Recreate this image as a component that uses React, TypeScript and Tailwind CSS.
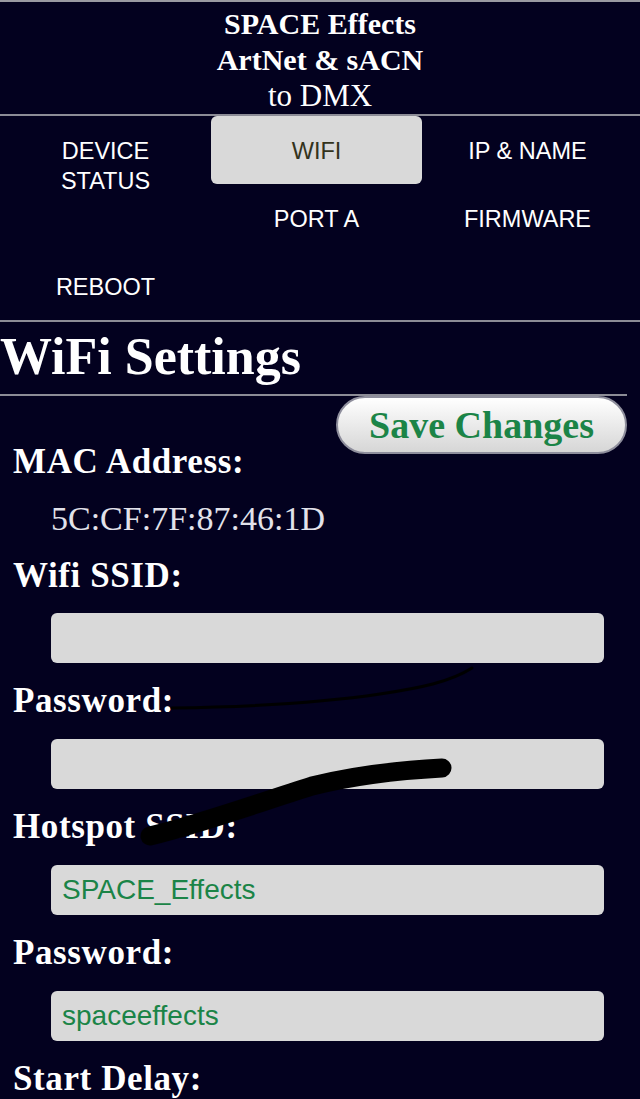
const serif = "font-['Liberation_Serif',_'Times_New_Roman',_serif]";
const sans = "font-['Liberation_Sans',_Arial,_sans-serif]";

const navItems: (string | null)[] = [
  "DEVICE STATUS",
  "WIFI",
  "IP & NAME",
  null,
  "PORT A",
  "FIRMWARE",
  "REBOOT",
];

function Label({ children, top = "mt-[18px]" }: { children: React.ReactNode; top?: string }) {
  return (
    <div
      className={`${serif} ${top} pl-[13px] text-[35px] font-bold leading-[40px] tracking-[0.6px] text-white`}
    >
      {children}
    </div>
  );
}

function Field({ value, top = "mt-[18px]" }: { value?: string; top?: string }) {
  return (
    <div
      className={`${sans} ${top} ml-[51px] flex h-[50px] w-[553px] items-center rounded-[6px] bg-[#d9d9d9] px-[11px] text-[28px] text-[#1b8447]`}
    >
      {value}
    </div>
  );
}

export default function App() {
  return (
    <div className="relative min-h-screen w-[640px] overflow-hidden bg-[#03011f]">
      <div className="border-t-[2px] border-[#9a9aa2]" />
      <header className={`${serif} pt-[4px] text-center text-[30px] leading-[36px] text-white`}>
        <div className="font-bold">SPACE Effects</div>
        <div className="font-bold">ArtNet &amp; sACN</div>
        <div className="text-[31px]">to DMX</div>
      </header>
      <div className="h-[2px] bg-[#8c8c96]" />

      <nav className={`${sans} grid grid-cols-[211px_211px_211px] text-[23.5px]`}>
        {navItems.map((item, i) => (
          <div key={i} className="h-[68px]">
            {item && (
              <div
                className={`mx-auto flex h-[68px] w-[211px] justify-center pt-[20px] text-center leading-[30px] ${
                  item === "WIFI" ? "rounded-[6px] bg-[#d9d9d9] text-[#33331c]" : "text-white"
                }`}
              >
                {item === "DEVICE STATUS" ? (
                  <span>
                    DEVICE
                    <br />
                    STATUS
                  </span>
                ) : (
                  item
                )}
              </div>
            )}
          </div>
        ))}
      </nav>
      <div className="h-[2px] bg-[#8c8c96]" />

      <h1 className={`${serif} h-[72px] pt-[10px] text-[52px] font-bold leading-[50px] text-white`}>
        WiFi Settings
      </h1>
      <div className="h-[2px] w-[627px] bg-[#8c8c96]" />

      <section className="flow-root">
        <button
          className={`${serif} float-right mr-[13px] h-[58px] w-[291px] rounded-full border-[2px] border-[#8e8e9c] bg-gradient-to-b from-white to-[#d6d6d6] text-[38px] font-bold leading-[50px] text-[#1b8447]`}
        >
          Save Changes
        </button>
        <Label top="mt-[46px]">MAC Address:</Label>
        <div className={`${serif} mt-[17px] pl-[51px] text-[34px] leading-[40px] text-[#e2e2ea]`}>
          5C:CF:7F:87:46:1D
        </div>
        <Label top="mt-[17px]">Wifi SSID:</Label>
        <Field top="mt-[17px]" />
        <Label>Password:</Label>
        <Field />
        <Label>Hotspot SSID:</Label>
        <Field value="SPACE_Effects" />
        <Label>Password:</Label>
        <Field value="spaceeffects" />
        <Label>Start Delay:</Label>
      </section>

      {/* marker scribbles over the screenshot */}
      <svg className="pointer-events-none absolute left-0 top-0" width="640" height="1099">
        <path
          d="M172 708 C 240 707, 320 703, 380 694 C 420 688, 450 682, 472 668"
          fill="none"
          stroke="#000"
          strokeWidth="3"
          strokeLinecap="round"
        />
        <path
          d="M150 836 C 200 824, 255 804, 312 786 C 360 774, 405 770, 442 768"
          fill="none"
          stroke="#000"
          strokeWidth="19"
          strokeLinecap="round"
        />
      </svg>
    </div>
  );
}
